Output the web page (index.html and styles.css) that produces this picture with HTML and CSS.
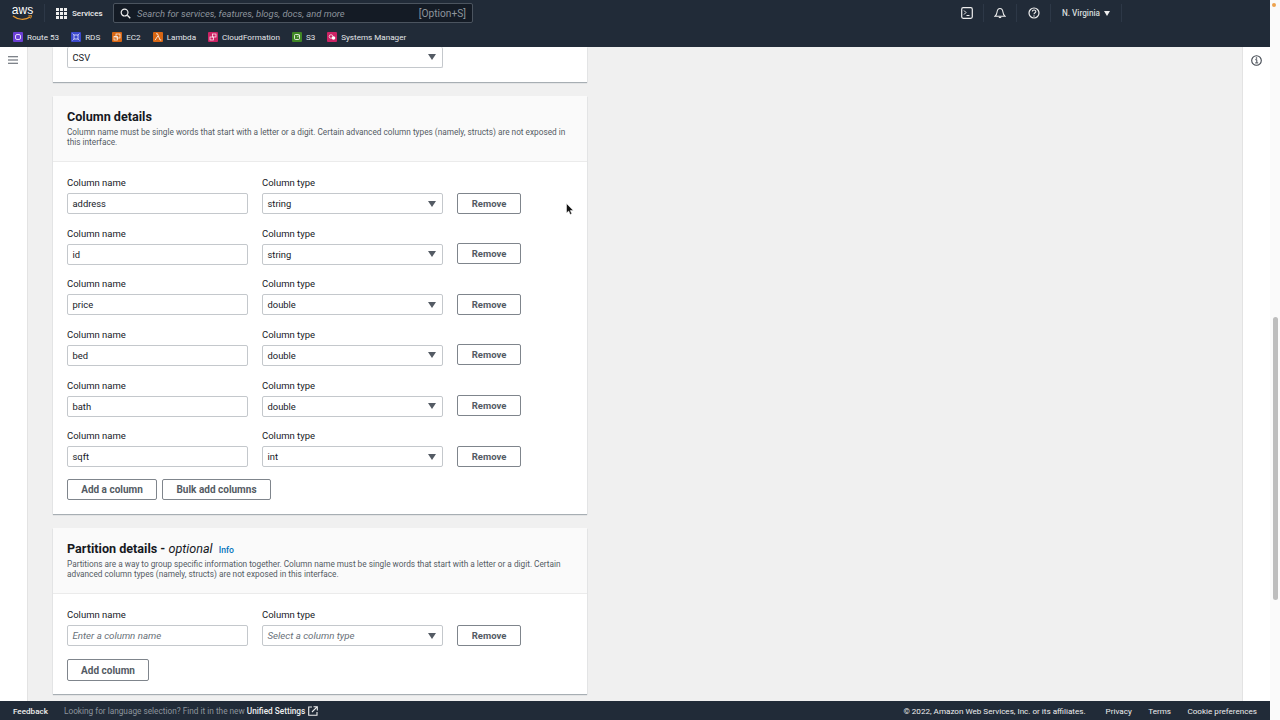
FILE: index.html
```html
<!DOCTYPE html>
<html lang="en">
<head>
<meta charset="utf-8">
<title>Create table</title>
<link rel="stylesheet" href="styles.css">
</head>
<body>
<div class="page">
  <header class="topnav">
    <div class="navrow">
      <div class="aws"><span class="aws-text">aws</span><svg class="smile" viewBox="0 0 22 6" width="21" height="6"><path d="M1 1c5 4 13 4.500 18 1" fill="none" stroke="#ec9a2d" stroke-width="1.300"/><path d="M17 .8l3.500-.3-1 3" fill="none" stroke="#ec9a2d" stroke-width="1"/></svg></div>
      <span class="navsep"></span>
      <svg class="grid-ico" viewBox="0 0 11 11" width="11" height="11"><g fill="#eee"><rect width="3" height="3"/><rect x="4" width="3" height="3"/><rect x="8" width="3" height="3"/><rect y="4" width="3" height="3"/><rect x="4" y="4" width="3" height="3"/><rect x="8" y="4" width="3" height="3"/><rect y="8" width="3" height="3"/><rect x="4" y="8" width="3" height="3"/><rect x="8" y="8" width="3" height="3"/></g></svg>
      <span class="services">Services</span>
      <div class="search">
        <svg viewBox="0 0 12 12" width="11" height="11"><circle cx="5" cy="5" r="3.700" fill="none" stroke="#eee" stroke-width="1.300"/><path d="M8 8l3.200 3.200" stroke="#eee" stroke-width="1.500"/></svg>
        <span class="search-text">Search for services, features, blogs, docs, and more</span>
        <span class="search-key">[Option+S]</span>
      </div>
      <div class="navright">
        <span class="navicon"><svg viewBox="0 0 12 12" width="12" height="12"><rect x=".7" y=".7" width="10.600" height="10.600" rx="1.500" fill="none" stroke="#eee" stroke-width="1.200"/><path d="M3 3.500l2 2-2 2M5.500 8.500h3" fill="none" stroke="#eee"/></svg></span>
        <span class="navicon"><svg viewBox="0 0 12 12" width="12" height="12"><path d="M1 9.300c1.500-1 1.800-2.300 2-4C3.300 3 4.300 1.500 6 1.500S8.700 3 9 5.300c.2 1.700.5 3 2 4z" fill="none" stroke="#eee" stroke-width="1.100"/><path d="M4.800 10.500h2.400" stroke="#eee" stroke-width="1.100"/></svg></span>
        <span class="navicon"><svg viewBox="0 0 12 12" width="12" height="12"><circle cx="6" cy="6" r="5" fill="none" stroke="#eee" stroke-width="1.200"/><path d="M4.300 4.600c0-2.100 3.500-2.100 3.500-.1 0 1.300-1.800 1.300-1.800 2.800" fill="none" stroke="#eee" stroke-width="1.100"/><circle cx="6" cy="9" r=".7" fill="#eee"/></svg></span>
        <span class="region">N. Virginia</span><span class="caret-w"></span>
        <span class="navend"></span>
      </div>
    </div>
    <div class="favs">
      <span class="fav"><svg class="fi" viewBox="0 0 10 10" style="background:#6b3fd4"><rect x="2.500" y="2.500" width="5" height="5" rx="1.500" fill="none" stroke="#fff" stroke-width=".8"/></svg>Route 53</span>
      <span class="fav"><svg class="fi" viewBox="0 0 10 10" style="background:#3b48cc"><rect x="3" y="3" width="4" height="4" fill="none" stroke="#fff" stroke-width=".7"/><path d="M1.500 1.500l1.500 1.500M8.500 1.500L7 3M1.500 8.500L3 7M8.500 8.500L7 7" stroke="#fff" stroke-width=".6"/></svg>RDS</span>
      <span class="fav"><svg class="fi" viewBox="0 0 10 10" style="background:#d86613"><rect x="4" y="2" width="4" height="4" fill="none" stroke="#fff" stroke-width=".7"/><rect x="2" y="4.500" width="3.500" height="3.500" fill="none" stroke="#fff" stroke-width=".7"/></svg>EC2</span>
      <span class="fav"><svg class="fi" viewBox="0 0 10 10" style="background:#d86613"><path d="M3 1.800h1.500L7 8h1.300M4.800 4L2 8.200" fill="none" stroke="#fff" stroke-width=".8"/></svg>Lambda</span>
      <span class="fav"><svg class="fi" viewBox="0 0 10 10" style="background:#cc2264"><rect x="4.500" y="2" width="3.500" height="3" fill="none" stroke="#fff" stroke-width=".7"/><rect x="2" y="5" width="3.500" height="3" fill="none" stroke="#fff" stroke-width=".7"/></svg>CloudFormation</span>
      <span class="fav"><svg class="fi" viewBox="0 0 10 10" style="background:#3f8624"><rect x="2.500" y="2.500" width="5" height="5" rx="1" fill="none" stroke="#fff" stroke-width=".8"/><path d="M5 5l3-2" stroke="#fff" stroke-width=".6"/></svg>S3</span>
      <span class="fav"><svg class="fi" viewBox="0 0 10 10" style="background:#cc2264"><circle cx="4" cy="4.500" r="1.800" fill="none" stroke="#fff" stroke-width=".7"/><circle cx="6.500" cy="6" r="1.800" fill="#fff"/></svg>Systems Manager</span>
    </div>
  </header>
  <div class="shell">
    <aside class="leftrail">
      <svg viewBox="0 0 10 8" width="10" height="8"><path d="M0 .7h10M0 4h10M0 7.300h10" stroke="#545b64" stroke-width="1.100"/></svg>
    </aside>
    <main class="content">
      <section class="card card-top">
        <div class="select select-first"><span>CSV</span><i class="caret"></i></div>
      </section>

      <section class="card card-cols">
        <div class="card-head">
          <h2 class="title">Column details</h2>
          <p class="desc">Column name must be single words that start with a letter or a digit. Certain advanced column types (namely, structs) are not exposed in this interface.</p>
        </div>
        <div class="card-body">
          <div class="row"><label>Column name</label><label>Column type</label><span></span><div class="input">address</div><div class="select"><span>string</span><i class="caret"></i></div><button class="btn">Remove</button></div>
          <div class="row"><label>Column name</label><label>Column type</label><span></span><div class="input">id</div><div class="select"><span>string</span><i class="caret"></i></div><button class="btn">Remove</button></div>
          <div class="row"><label>Column name</label><label>Column type</label><span></span><div class="input">price</div><div class="select"><span>double</span><i class="caret"></i></div><button class="btn">Remove</button></div>
          <div class="row"><label>Column name</label><label>Column type</label><span></span><div class="input">bed</div><div class="select"><span>double</span><i class="caret"></i></div><button class="btn">Remove</button></div>
          <div class="row"><label>Column name</label><label>Column type</label><span></span><div class="input">bath</div><div class="select"><span>double</span><i class="caret"></i></div><button class="btn">Remove</button></div>
          <div class="row"><label>Column name</label><label>Column type</label><span></span><div class="input">sqft</div><div class="select"><span>int</span><i class="caret"></i></div><button class="btn">Remove</button></div>
          <div class="actions"><button class="btn btn-add">Add a column</button><button class="btn btn-bulk">Bulk add columns</button></div>
        </div>
      </section>

      <section class="card card-parts">
        <div class="card-head">
          <h2 class="title">Partition details - <em>optional</em> <a class="info">Info</a></h2>
          <p class="desc">Partitions are a way to group specific information together. Column name must be single words that start with a letter or a digit. Certain advanced column types (namely, structs) are not exposed in this interface.</p>
        </div>
        <div class="card-body">
          <div class="row"><label>Column name</label><label>Column type</label><span></span><div class="input ph">Enter a column name</div><div class="select ph"><span>Select a column type</span><i class="caret"></i></div><button class="btn">Remove</button></div>
          <div class="actions"><button class="btn btn-addc">Add column</button></div>
        </div>
      </section>

      <svg class="cursor" viewBox="0 0 8 13" width="8" height="13"><path d="M.5.5v9.500l2.200-2 1.500 3.500 1.600-.7-1.500-3.300h3z" fill="#111" stroke="#fff" stroke-width=".5"/></svg>
    </main>
    <aside class="rightrail">
      <svg viewBox="0 0 11 11" width="11" height="11"><circle cx="5.500" cy="5.500" r="4.800" fill="none" stroke="#414750" stroke-width="1.100"/><path d="M4.300 4.700h1.500v2.900M4.200 7.900h3" fill="none" stroke="#414750"/><circle cx="5.500" cy="3" r=".8" fill="#414750"/></svg>
    </aside>
  </div>
  <footer class="footer">
    <span class="fb">Feedback</span>
    <span class="lang">Looking for language selection? Find it in the new <b>Unified Settings</b></span>
    <svg viewBox="0 0 10 10" width="10" height="10"><path d="M4 1H.7v8.300H9V6" fill="none" stroke="#eee" stroke-width="1.100"/><path d="M5.500.7h3.800v3.800M9.300.7L4 6" fill="none" stroke="#eee" stroke-width="1.100"/></svg>
    <span class="foot-right"><span class="copy">© 2022, Amazon Web Services, Inc. or its affiliates.</span><span>Privacy</span><span>Terms</span><span>Cookie preferences</span></span>
  </footer>
</div>
<div class="scrollbar"><span class="dot"></span><span class="thumb"></span></div>
</body>
</html>
```
FILE: styles.css
```css
* { box-sizing: border-box; }
html, body { margin: 0; height: 720px; overflow: hidden; }
body { display: flex; font-family: Roboto, "Liberation Sans", sans-serif; color: #16191f; background: #fff; font-size: 8.8px; }
.page { width: 1270px; height: 720px; display: flex; flex-direction: column; }

.topnav { height: 47px; background: #212b38; color: #eee; flex: none; }
.navrow { height: 26px; display: flex; align-items: center; padding-left: 12px; }
.aws { width: 21px; height: 20px; display: flex; flex-direction: column; align-items: center; }
.aws-text { font: 12px/12px "Liberation Sans", sans-serif; color: #fff; margin-top: 1px; }
.smile { margin-top: -1px; }
.navsep { width: 1px; height: 18px; background: #2d3847; margin: 0 11px 0 11px; }
.grid-ico { margin-right: 5px; }
.services { width: 41px; font-weight: 500; font-size: 8px; }
.search { width: 360px; height: 20px; background: #141b25; border: 1px solid #4b545f; border-radius: 2px; display: flex; align-items: center; padding: 0 6px 0 6px; color: #8d949c; font-size: 9.400px; }
.search svg { margin-right: 6px; }
.search-text { font-style: italic; flex: 1; }
.search-key { font-size: 10.200px; }
.navright { display: flex; align-items: center; margin-left: auto; height: 26px; padding-right: 148px; }
.navicon { width: 33.500px; height: 18px; border-right: 1px solid #2d3847; display: flex; align-items: center; justify-content: center; }
.region { margin-left: 11px; font-weight: 500; color: #d5dbdb; font-size: 8.200px; }
.caret-w { width: 0; height: 0; border: 3px solid transparent; border-top: 5px solid #eee; border-bottom: 0; margin-left: 4px; }
.navend { width: 1px; height: 18px; background: #2d3847; margin-left: 11px; }
.favs { height: 21px; display: flex; align-items: center; padding-left: 13px; gap: 12px; }
.fav { display: flex; align-items: center; gap: 4px; font-size: 8.100px; color: #e4e7ea; }
.fi { width: 10px; height: 10px; border-radius: 1px; }

.shell { flex: 1; min-height: 0; display: flex; }
.leftrail { width: 28px; flex: none; background: #fff; border-right: 1px solid #e3e3e3; padding: 9px 0 0 8px; }
.rightrail { width: 28px; flex: none; background: #fff; border-left: 1px solid #e3e3e3; padding: 8px 0 0 8px; }
.content { flex: 1; min-width: 0; background: #f0f0f0; padding-left: 25px; overflow: hidden; position: relative; }

.card { width: 534px; background: #fff; box-shadow: 0 1px 1px rgba(0,22,40,.3); }
.card-top { height: 35px; padding: 0 14px; margin-bottom: 14px; }
.card-cols { height: 418px; margin-bottom: 14px; }
.card-parts { height: 166px; }
.card-head { height: 65.500px; background: #fafafa; border-bottom: 1px solid #ebebeb; padding: 13px 14px 0; }
.title { margin: 0; height: 15px; font-size: 12.600px; line-height: 15px; font-weight: 700; color: #16191f; }
.title em { font-weight: 400; }
.info { font-size: 8.600px; font-weight: 500; color: #0073bb; margin-left: 3px; }
.desc { margin: 3px 0 0; font-size: 8.250px; line-height: 10.400px; color: #545b64; }
.card-body { padding: 15.500px 14px 0; }

.row { display: grid; grid-template-columns: 181px 181px 64px; grid-template-rows: 11px 21px; column-gap: 14px; row-gap: 5px; height: 50.670px; align-items: center; }
.row .btn { margin-bottom: 1px; }
label { font-size: 9.500px; color: #16191f; line-height: 11px; }
.input, .select { height: 21px; border: 1px solid #c4c8cc; border-radius: 2px; background: #fff; display: flex; align-items: center; padding-left: 4.500px; padding-right: 6.500px; font-size: 9.400px; color: #16191f; }
.select { justify-content: space-between; }
.select-first { width: 376px; border-top: 0; }
.caret { width: 0; height: 0; border: 4px solid transparent; border-top: 6px solid #545b64; border-bottom: 0; }
.input.ph, .select.ph { font-style: italic; color: #687078; font-size: 9.700px; }
.btn { height: 21px; padding: 0; border: 1px solid #7f858c; border-radius: 2px; background: #fff; font-family: inherit; font-size: 9.500px; font-weight: 700; color: #545b64; }
.actions { display: flex; gap: 5px; margin-top: -2px; }
.actions .btn { font-size: 10px; padding-top: 1px; }
.btn-add { width: 90px; }
.btn-bulk { width: 109px; }
.btn-addc { width: 82px; height: 22px; }
.card-parts .actions { margin-top: -1px; }

.cursor { position: absolute; left: 538px; top: 156px; }

.footer { height: 19px; flex: none; background: #212b38; color: #eee; display: flex; align-items: center; padding: 0 13px; font-size: 8.100px; }
.fb { width: 51px; font-weight: 500; }
.lang { color: #8d949c; margin-right: 3px; font-size: 8.250px; }
.lang b { color: #eee; font-weight: 500; }
.foot-right { margin-left: auto; display: flex; gap: 16.500px; }
.copy { margin-right: 3.500px; }

.scrollbar { width: 10px; height: 720px; background: #fafafa; position: relative; flex: none; }
.dot { position: absolute; left: 2px; top: 3px; width: 4px; height: 4px; border-radius: 50%; background: #eda24e; }
.thumb { position: absolute; left: 3px; top: 317px; width: 5px; height: 283px; border-radius: 3px; background: #bdbdbd; }
```
